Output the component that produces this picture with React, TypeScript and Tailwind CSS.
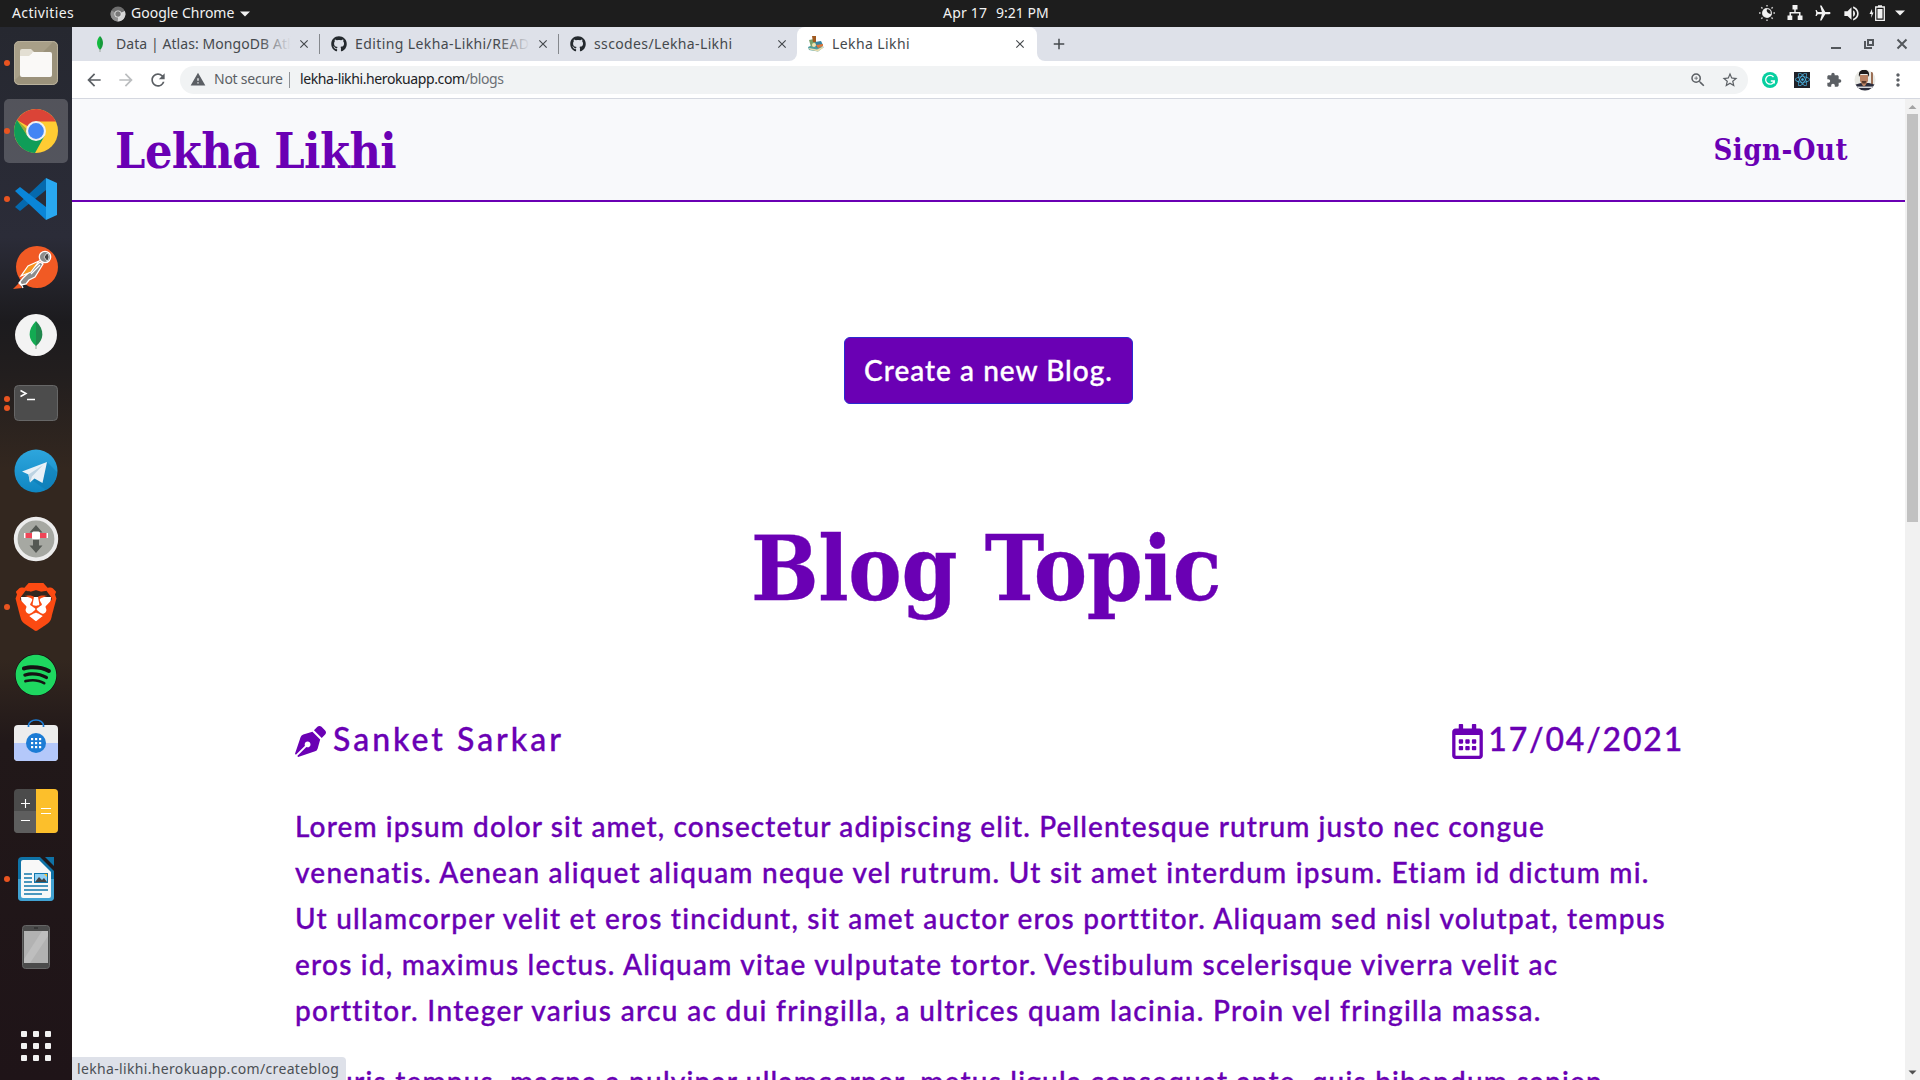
import type { ReactNode } from "react";
import { FaGithub, FaPenNib, FaReact, FaRegCalendarAlt, FaSpotify } from "react-icons/fa";
import {
  MdAdd,
  MdAirplanemodeActive,
  MdArrowBack,
  MdArrowForward,
  MdClose,
  MdExtension,
  MdMoreVert,
  MdRefresh,
  MdStarBorder,
  MdVolumeUp,
  MdWarning,
  MdZoomIn,
} from "react-icons/md";
import { SiBrave } from "react-icons/si";

/* ---------- system bar ---------- */

function TopBar() {
  return (
    <header className="flex h-[27px] shrink-0 items-center bg-[#1d1d1d] text-[14px] leading-[25px] whitespace-nowrap text-[#f2f2f2]">
      <span className="ml-3 w-[98px] pb-[2px] tracking-[0.37px]">Activities</span>
      <svg className="h-4 w-4" viewBox="0 0 16 16">
        <circle cx="8" cy="8" r="7.5" fill="#6e6e6e" />
        <path d="M8 8 14.8 5A7.5 7.5 0 0 1 7.4 15.5z" fill="#d6d6d6" />
        <path d="M8 8 7.4 15.5A7.5 7.5 0 0 1 1.5 4.4z" fill="#8f8f8f" />
        <circle cx="8" cy="8" r="3.6" fill="#e4e4e4" />
        <circle cx="8" cy="8" r="2.7" fill="#787878" />
      </svg>
      <span className="ml-[5px] w-[109px] pb-[2px]">Google Chrome</span>
      <Caret />
      <div className="ml-[693px] flex pb-[2px]">
        <span className="w-[53px] tracking-[0.2px]">Apr 17</span>
        <span>9:21 PM</span>
      </div>
      <div className="mr-[15px] ml-auto flex items-center pb-px text-[#f2f2f2]">
        <svg className="mr-3 h-4 w-4" viewBox="0 0 16 16" fill="none" stroke="#d0d0d0" strokeWidth="1.4">
          <circle cx="8" cy="8" r="4.4" />
          <path d="M8 3.6a4.4 4.4 0 1 0 4.4 5.4A4 4 0 0 1 8 3.6" fill="#f2f2f2" stroke="none" />
          <path d="M8 0v1.6M8 14.4V16M0 8h1.6M14.4 8H16M2.3 2.3l1.2 1.2M12.5 12.5l1.2 1.2M13.7 2.3l-1.2 1.2M3.5 12.5l-1.2 1.2" />
        </svg>
        <svg className="mr-[11px] h-4 w-4" viewBox="0 0 16 16" fill="#f2f2f2">
          <path d="M5.500 0h5v4.500H8.700V7H13.500v3.500H15.500v4.500H10.700v-4.500H12V8.500H4v2h1.300v4.500H.500v-4.500h2V7h4.800V4.500H5.500z" />
        </svg>
        <MdAirplanemodeActive className="mr-2.5 h-[18px] w-[18px] rotate-90" />
        <MdVolumeUp className="mr-2 h-[19px] w-[19px]" />
        <svg className="mr-2.5 h-4 w-4" viewBox="0 0 16 16">
          <path d="M3 4 .500 9h2L2 13l2.600-5.500H3.200z" fill="#f2f2f2" />
          <path d="M6.700 2h8.600v13.300H6.700z" fill="none" stroke="#f2f2f2" strokeWidth="1.300" />
          <path d="M9 .2h4V2H9zM8.500 4h5v9.500h-5z" fill="#f2f2f2" />
        </svg>
        <Caret />
      </div>
    </header>
  );
}

function Caret() {
  return (
    <svg className="h-[6px] w-[10px]" viewBox="0 0 10 6" fill="#f2f2f2">
      <path d="M0 .5h10L5 5.500z" />
    </svg>
  );
}

/* ---------- dock ---------- */

function DockIcon({ children }: { children: ReactNode }) {
  return (
    <svg className="h-12 w-12" viewBox="0 0 48 48">
      {children}
    </svg>
  );
}

const chrome = (
  <DockIcon>
    <circle cx="24" cy="24" r="22" fill="#fc3" />
    <path d="M24 24 5 13A22 22 0 0 1 43.900 14.600L24 14.600z" fill="#db4437" />
    <path d="M5 13A22 22 0 0 0 23 46l9.500-17L24 33.500 15.500 29z" fill="#0f9d58" />
    <path d="m5 13 10.500 16 .5-6z" fill="#0b8043" opacity=".4" />
    <circle cx="24" cy="24" r="10" fill="#f1f1f1" />
    <circle cx="24" cy="24" r="7.900" fill="#4285f4" />
  </DockIcon>
);

const dock: { name: string; windows: number; active?: boolean; icon: ReactNode }[] = [
  {
    name: "Files",
    windows: 1,
    icon: (
      <DockIcon>
        <rect x="2" y="2" width="44" height="44" rx="5" fill="#9b927b" />
        <path d="M7 3h34L3 41V7a4 4 0 0 1 4-4" fill="#a89f88" />
        <rect x="2.500" y="2.500" width="43" height="43" rx="5" fill="none" stroke="#b9b19c" />
        <path d="M8 12a2 2 0 0 1 2-2h9l4 4h-3l-3 4H8z" fill="#e3dfd3" />
        <path d="M8 17h9l4-4h17a2 2 0 0 1 2 2v21a2 2 0 0 1-2 2H10a2 2 0 0 1-2-2z" fill="#faf9f7" />
      </DockIcon>
    ),
  },
  { name: "Google Chrome", windows: 1, active: true, icon: chrome },
  {
    name: "Visual Studio Code",
    windows: 1,
    icon: (
      <DockIcon>
        <path d="M3 32 34 3v12L8 36z" fill="#0569ad" />
        <path d="m3 16 5-4 26 20v13z" fill="#0a86d8" />
        <path d="m34 3 11 5v32l-11 5z" fill="#29a8f0" />
      </DockIcon>
    ),
  },
  {
    name: "Postman",
    windows: 0,
    icon: (
      <DockIcon>
        <circle cx="25" cy="24" r="21" fill="#f15a24" />
        <path d="m1 46 6-6 3 5z" fill="#f15a24" />
        <circle cx="33" cy="14" r="5.700" fill="#8c8c8c" stroke="#fff" strokeWidth="1.300" />
        <path d="M35 10a5 5 0 0 1 0 8l-3-4z" fill="#444" stroke="#fff" strokeWidth=".7" />
        <path d="m28 19 3 2-8 13-6 3-3 4-5 1-2-2 4-5z" fill="#8c8c8c" stroke="#fff" strokeWidth="1.300" />
        <path d="M27 18 16 23 9 33l10-4z" fill="#f79420" stroke="#fff" strokeWidth="1.200" />
        <path d="m8 39 3 6M28 22l-9 9" stroke="#fff" strokeWidth="1.300" />
      </DockIcon>
    ),
  },
  {
    name: "MongoDB Compass",
    windows: 0,
    icon: (
      <DockIcon>
        <circle cx="24" cy="24" r="21" fill="#f3f3f3" />
        <path d="M24 33v5" stroke="#a9b5ad" strokeWidth="1.300" />
        <path d="M24 10c-9 9-8 19 0 25z" fill="#13aa52" />
        <path d="M24 10c9 9 8 19 0 25z" fill="#20874d" />
      </DockIcon>
    ),
  },
  {
    name: "Terminal",
    windows: 2,
    icon: (
      <DockIcon>
        <rect x="2.500" y="6.500" width="43" height="35" rx="4" fill="#4c4c4c" stroke="#676767" />
        <path d="m8.500 11.500 5.500 3-5.500 3" fill="none" stroke="#fff" strokeWidth="1.500" />
        <path d="M15 20.500h8" stroke="#fff" strokeWidth="1.500" />
      </DockIcon>
    ),
  },
  {
    name: "Telegram",
    windows: 0,
    icon: (
      <DockIcon>
        <defs>
          <linearGradient id="tg" x1="0" y1="0" x2="0" y2="1">
            <stop offset="0" stopColor="#2ea6dd" />
            <stop offset="1" stopColor="#0f86c2" />
          </linearGradient>
        </defs>
        <circle cx="24" cy="24" r="21.500" fill="url(#tg)" />
        <path d="m35 15 10 10a21 21 0 0 1-11 18L20 33z" fill="#0b76ad" opacity=".45" />
        <path d="M10 24.500 35 15l-4.500 21-8-4.500-4.500 4-1.500-8z" fill="#e9f1f7" />
        <path d="M16.500 27.500 31 18 20 29.500l-2 6z" fill="#bcd3e2" />
      </DockIcon>
    ),
  },
  {
    name: "Stretchly",
    windows: 0,
    icon: (
      <DockIcon>
        <circle cx="24" cy="24" r="20.300" fill="#a6a8a2" stroke="#ececec" strokeWidth="3.800" />
        <path d="m24 10 6.500 7.500h-3.500v13h3.500L24 38l-6.500-7.500H21v-13h-3.500z" fill="#555954" />
        <rect x="12" y="18" width="24" height="5" rx="1" fill="#ef4557" />
        <path d="M12 18h1.500v5H12zM34.500 18H36v5h-1.500z" fill="#fff" />
        <rect x="20" y="16.500" width="8" height="8" rx="1.500" fill="#fff" />
      </DockIcon>
    ),
  },
  {
    name: "Brave",
    windows: 1,
    icon: (
      <div className="grid h-12 w-12 place-items-center">
        <svg className="col-start-1 row-start-1 h-12 w-12" viewBox="0 0 48 48">
          <path d="M9 14h30l-1 13-7 12-7 4-7-4-7-12z" fill="#fff" />
        </svg>
        <SiBrave className="col-start-1 row-start-1 h-12 w-12 text-[#fb4a12]" />
      </div>
    ),
  },
  {
    name: "Spotify",
    windows: 0,
    icon: (
      <div className="flex h-12 w-12 items-center justify-center">
        <FaSpotify className="h-[42px] w-[42px] rounded-full bg-[#151213] text-[#1ed760]" />
      </div>
    ),
  },
  {
    name: "Software",
    windows: 0,
    icon: (
      <DockIcon>
        <rect x="2" y="6" width="44" height="36" rx="4" fill="#ededed" />
        <path d="M2 24h44v14a4 4 0 0 1-4 4H6a4 4 0 0 1-4-4z" fill="#b4c8fa" />
        <path d="M16.500 8V6.500a7.500 5.500 0 0 1 15 0V8" fill="none" stroke="#1c7cd5" strokeWidth="1.700" />
        <circle cx="24" cy="24" r="10" fill="#1c7cd5" />
        <g fill="#fff">
          {[19, 23, 27].map((y) => [19, 23, 27].map((x) => <rect key={`${x}-${y}`} x={x} y={y} width="2.200" height="2.200" />))}
        </g>
      </DockIcon>
    ),
  },
  {
    name: "Calculator",
    windows: 0,
    icon: (
      <DockIcon>
        <rect x="2" y="2" width="44" height="44" rx="4" fill="#4b4b4b" />
        <path d="M2 24h22v22H6a4 4 0 0 1-4-4z" fill="#5e5e5e" />
        <path d="M24 2h18a4 4 0 0 1 4 4v36a4 4 0 0 1-4 4H24z" fill="#fcbf2b" />
        <path d="M9 16.500h9M13.500 12v9M9 33.500h9M29 21.500h10M29 26.500h10" stroke="#fff" strokeWidth="1.100" />
      </DockIcon>
    ),
  },
  {
    name: "Writer",
    windows: 1,
    icon: (
      <DockIcon>
        <path d="M10 2h18l14 14v26a4 4 0 0 1-4 4H10a4 4 0 0 1-4-4V6a4 4 0 0 1 4-4" fill="#0f72a6" />
        <path d="M6 24h36v18a4 4 0 0 1-4 4H10a4 4 0 0 1-4-4z" fill="#41a2d2" />
        <path d="M33 2h9v9z" fill="#0f72a6" />
        <path d="M11 5h16l12 12v24a2 2 0 0 1-2 2H11a2 2 0 0 1-2-2V7a2 2 0 0 1 2-2" fill="#f8f8f8" />
        <path d="M12 19h8M12 23h8M12 27h8M12 31h24M12 35h24M12 39h18" stroke="#1277ab" strokeWidth="1.600" />
        <rect x="22.500" y="18.500" width="13" height="9" fill="#8fd0f4" stroke="#1277ab" />
        <path d="m23 27 4-5 3 3 2-2 3 4z" fill="#444" />
        <path d="M32 19h3v3z" fill="#fcbf2b" />
      </DockIcon>
    ),
  },
  {
    name: "Phone",
    windows: 0,
    icon: (
      <DockIcon>
        <rect x="10.500" y="2.500" width="27" height="43" rx="3" fill="#4b4b4b" stroke="#666" />
        <path d="M22 5h4" stroke="#222" />
        <path d="M12 8h24v32H12z" fill="#b2b2b2" />
        <path d="M30 8h6v5L18 40h-6v-4z" fill="#bebebe" />
      </DockIcon>
    ),
  },
];

function Dock() {
  return (
    <nav className="flex w-[72px] shrink-0 flex-col bg-[linear-gradient(to_bottom,#262830_0%,#2b2c38_20%,#1c1b1e_28%,#221e1e_33%,#33271f_42%,#33271f_60%,#211819_68%,#1f1418_100%)] pt-[2px]">
      {dock.map((app) => (
        <div key={app.name} className="flex h-[68px] items-center">
          <div
            className={
              app.active
                ? "ml-1 flex h-16 w-16 items-center rounded-[5px] bg-white/20"
                : "ml-1 flex h-16 w-16 items-center"
            }
          >
            <div className="mr-[2px] flex w-[6px] flex-col gap-[3px]">
              {Array.from({ length: app.windows }, (_, i) => (
                <span key={i} className="h-[6px] w-[6px] rounded-full bg-[#e95420]" />
              ))}
            </div>
            {app.icon}
          </div>
        </div>
      ))}
      <div className="mt-auto mb-[19px] grid grid-cols-3 gap-[6px] self-center">
        {Array.from({ length: 9 }, (_, i) => (
          <span key={i} className="h-[6px] w-[6px] rounded-[1px] bg-[#f2f2f2]" />
        ))}
      </div>
    </nav>
  );
}

/* ---------- browser chrome ---------- */

function Tab({
  icon,
  title,
  fade,
  separator,
}: {
  icon: ReactNode;
  title: ReactNode;
  fade?: boolean;
  separator?: boolean;
}) {
  return (
    <div className="flex w-[239px] shrink-0 items-center">
      <div className="ml-[11px] flex w-4 justify-center">{icon}</div>
      <div className="relative ml-2 w-[175px] overflow-hidden whitespace-nowrap">
        {title}
        {fade && <div className="absolute inset-y-0 right-0 w-8 bg-linear-to-r from-[#dee1e9]/0 to-[#dee1e9]" />}
      </div>
      <MdClose className="ml-[6px] h-[14px] w-[14px] shrink-0" />
      {separator && <div className="ml-[8px] h-5 w-px bg-[#85888d]" />}
    </div>
  );
}

function TabStrip() {
  return (
    <div className="flex h-[34px] bg-[#dee1e9] text-[14px] leading-5 text-[#45494d]">
      <div className="flex items-center pl-[9px]">
        <Tab
          separator
          fade
          icon={
            <svg className="h-4 w-2" viewBox="0 0 8 16">
              <path d="M4 0C0 4 0 10 4 14z" fill="#13b93f" />
              <path d="M4 0c4 4 4 10 0 14z" fill="#159a3a" />
              <path d="M4 13v3" stroke="#9aa59d" />
            </svg>
          }
          title={<span className="tracking-[0.07px]">Data | Atlas: MongoDB Atlas</span>}
        />
        <Tab
          separator
          fade
          icon={<FaGithub className="h-4 w-4 text-[#24292e]" />}
          title={<span className="tracking-[0.4px]">Editing Lekha-Likhi/README.md</span>}
        />
        <Tab
          icon={<FaGithub className="h-4 w-4 text-[#24292e]" />}
          title={<span className="tracking-[0.37px]">sscodes/Lekha-Likhi</span>}
        />
      </div>
      <div className="-ml-[9px] flex w-2 items-end bg-white">
        <div className="h-full w-full rounded-br-lg bg-[#dee1e9]" />
      </div>
      <div className="flex bg-[#dee1e9]">
        <div className="flex w-[240px] items-center rounded-t-lg bg-white">
          <Tab
            icon={
              <svg className="h-4 w-4" viewBox="0 0 16 16">
                <path d="m0 11 7-3 9 3-6 4.500-9-1.500z" fill="#4e9ea0" />
                <path d="m1 12 8 1.500 6-3v1.500l-5 3.500-8.500-2z" fill="#e8dcae" />
                <path d="m7 6 6-1 2 4-5 3-5-2z" fill="#3683a0" />
                <path d="m8 9 7-1v2l-5 2z" fill="#e0773a" />
                <path d="m1 4 5-1 2 6-5 2z" fill="#7aa06a" />
                <path d="M4 0h4v6H5z" fill="#a05a20" />
                <circle cx="6" cy="9" r="2" fill="#f3e5b0" />
              </svg>
            }
            title={<span className="tracking-[0.4px]">Lekha Likhi</span>}
          />
        </div>
      </div>
      <div className="w-2 bg-white">
        <div className="h-full w-full rounded-bl-lg bg-[#dee1e9]" />
      </div>
      <MdAdd className="mt-[8px] ml-[5px] h-[18px] w-[18px]" />
      <div className="mr-[12px] ml-auto flex items-center gap-[21px] text-[#53575c]">
        <svg className="h-3 w-3" viewBox="0 0 12 12" stroke="currentColor" strokeWidth="2">
          <path d="M1 10h10" />
        </svg>
        <svg className="h-3 w-3" viewBox="0 0 12 12" fill="none" stroke="currentColor" strokeWidth="2">
          <path d="M5 2h5v5H5zM2 3v7h7" />
        </svg>
        <svg className="h-3 w-3" viewBox="0 0 12 12" stroke="currentColor" strokeWidth="2">
          <path d="m1.500 1.500 9 9M10.500 1.500l-9 9" />
        </svg>
      </div>
    </div>
  );
}

function Toolbar() {
  return (
    <div className="flex h-[38px] items-center border-b border-[#d5d8e0] bg-white text-[14px] text-[#5b5f64]">
      <MdArrowBack className="ml-3 h-5 w-5" />
      <MdArrowForward className="ml-3 h-5 w-5 text-[#bbbdbf]" />
      <MdRefresh className="ml-3 h-5 w-5" />
      <div className="ml-3 flex h-7 w-[1568px] items-center rounded-full bg-[#f1f3f4] leading-[26px]">
        <MdWarning className="ml-[10px] h-[17px] w-4" />
        <span className="ml-2 w-[75px] pb-[2px] tracking-[-0.25px]">Not secure</span>
        <div className="h-4 w-px bg-[#8f9296]" />
        <span className="ml-[10px] pb-[2px] tracking-[-0.39px] text-[#202124]">
          lekha-likhi.herokuapp.com<span className="text-[#6b6f74]">/blogs</span>
        </span>
        <MdZoomIn className="ml-auto h-[18px] w-[18px]" />
        <MdStarBorder className="mr-[9px] ml-[14px] h-[18px] w-[18px]" />
      </div>
      <svg className="ml-[14px] h-4 w-4" viewBox="0 0 16 16">
        <circle cx="8" cy="8" r="8" fill="#07cfa0" />
        <path d="M11.500 5A4.400 4.400 0 1 0 12.300 9H8.800M12.300 8.400v3.200" fill="none" stroke="#fff" strokeWidth="1.300" />
      </svg>
      <div className="ml-4 flex h-4 w-4 items-center justify-center bg-[#20232a]">
        <FaReact className="h-[15px] w-[15px] text-[#4db8e8]" />
      </div>
      <MdExtension className="ml-4 h-4 w-4" />
      <svg className="ml-3 h-[22px] w-[22px]" viewBox="0 0 22 22">
        <clipPath id="avatar">
          <circle cx="11" cy="11" r="10.500" />
        </clipPath>
        <g clipPath="url(#avatar)">
          <path d="M0 0h22v22H0z" fill="#e9e9e4" />
          <path d="M17 3h2v13h-2z" fill="#9c6f55" />
          <path d="M0 16 7 14h8l7 2v6H0z" fill="#2a2c3c" />
          <path d="M0 17.500h22v1.500H0z" fill="#d8d8dc" />
          <path d="M6 6h8v6l-3 5h-2l-3-5z" fill="#b98263" />
          <path d="M5 8c-1-7 3-7 5-7s6 0 5 7l-1.500-3h-7z" fill="#1c1a1b" />
          <path d="M7.500 12h5l-1 2.500H8.500z" fill="#59392c" />
        </g>
      </svg>
      <MdMoreVert className="ml-[12px] h-5 w-5" />
    </div>
  );
}

function Scrollbar() {
  return (
    <div className="flex w-[15px] shrink-0 flex-col items-center bg-[#f1f1f1]">
      <svg className="h-[15px] w-[9px]" viewBox="0 0 9 15" fill="#a3a3a3">
        <path d="M.5 10h8l-4-4z" />
      </svg>
      <div className="h-[408px] w-[11px] bg-[#c1c1c1]" />
      <svg className="mt-auto h-[15px] w-[9px]" viewBox="0 0 9 15" fill="#505050">
        <path d="M.5 5.500h8l-4 4z" />
      </svg>
    </div>
  );
}

/* ---------- blog page ---------- */

function BlogPage() {
  return (
    <div className="min-w-0 flex-1 overflow-hidden bg-white text-[#6a00b4]">
      <div className="flex h-[103px] justify-between border-b-2 border-[#6a00b4] bg-[#f8f9fb] pr-[57px] pl-[43px] [font-family:'DejaVu_Serif_Condensed','DejaVu_Serif',serif] font-bold">
        <span className="pt-[28px] text-[48px] leading-none tracking-[-0.5px]">Lekha Likhi</span>
        <span className="pt-[37px] text-[29px] leading-none tracking-[0.5px]">Sign-Out</span>
      </div>
      <main className="mx-auto flex w-[1387px] flex-col items-center pt-[135px] [font-family:Lato,sans-serif] text-[28px] leading-[46px] font-medium whitespace-nowrap [-webkit-text-stroke:0.35px_currentColor]">
        <button className="h-[67px] w-[289px] rounded-md border border-[#2a2ad0] bg-[#6a00b4] pb-[2px] tracking-[1.02px] text-white">
          Create a new Blog.
        </button>
        <h1 className="mt-[120px] mr-[5px] [font-family:'DejaVu_Serif_Condensed','DejaVu_Serif',serif] text-[89px] leading-none font-bold tracking-[-0.3px]">
          Blog Topic
        </h1>
        <div className="mt-[110px] flex h-[37px] w-full items-center justify-between text-[32px]">
          <div className="flex items-center gap-[7px]">
            <FaPenNib className="h-[31px] w-[31px]" />
            <span className="pb-[5px] tracking-[2.98px]">Sanket Sarkar</span>
          </div>
          <div className="flex items-center gap-[5px]">
            <FaRegCalendarAlt className="h-[35px] w-[31px]" />
            <span className="-mr-[2px] pb-[5px] tracking-[1.8px]">17/04/2021</span>
          </div>
        </div>
        <p className="mt-[43px] w-full">
          <span className="block tracking-[1.11px]">
            Lorem ipsum dolor sit amet, consectetur adipiscing elit. Pellentesque rutrum justo nec congue
          </span>
          <span className="block tracking-[1.225px]">
            venenatis. Aenean aliquet aliquam neque vel rutrum. Ut sit amet interdum ipsum. Etiam id dictum mi.
          </span>
          <span className="block tracking-[1.2px]">
            Ut ullamcorper velit et eros tincidunt, sit amet auctor eros porttitor. Aliquam sed nisl volutpat, tempus
          </span>
          <span className="block tracking-[1.22px]">
            eros id, maximus lectus. Aliquam vitae vulputate tortor. Vestibulum scelerisque viverra velit ac
          </span>
          <span className="block tracking-[1.32px]">
            porttitor. Integer varius arcu ac dui fringilla, a ultrices quam lacinia. Proin vel fringilla massa.
          </span>
        </p>
        <p className="mt-[25px] w-full tracking-[1.21px]">
          Mauris tempus, magna a pulvinar ullamcorper, metus ligula consequat ante, quis bibendum sapien
        </p>
      </main>
    </div>
  );
}

export default function App() {
  return (
    <div className="flex h-[1080px] w-[1920px] flex-col overflow-hidden [font-family:'Noto_Sans','Open_Sans',sans-serif]">
      <TopBar />
      <div className="flex min-h-0 flex-1">
        <Dock />
        <div className="relative flex min-w-0 flex-1 flex-col">
          <TabStrip />
          <Toolbar />
          <div className="flex min-h-0 flex-1">
            <BlogPage />
            <Scrollbar />
          </div>
          <div className="absolute bottom-0 left-0 h-[23px] w-[274px] rounded-tr bg-[#dee1e9] pl-[5px] text-[14px] leading-[23px] tracking-[0.34px] text-[#4b4f54]">
            lekha-likhi.herokuapp.com/createblog
          </div>
        </div>
      </div>
    </div>
  );
}
